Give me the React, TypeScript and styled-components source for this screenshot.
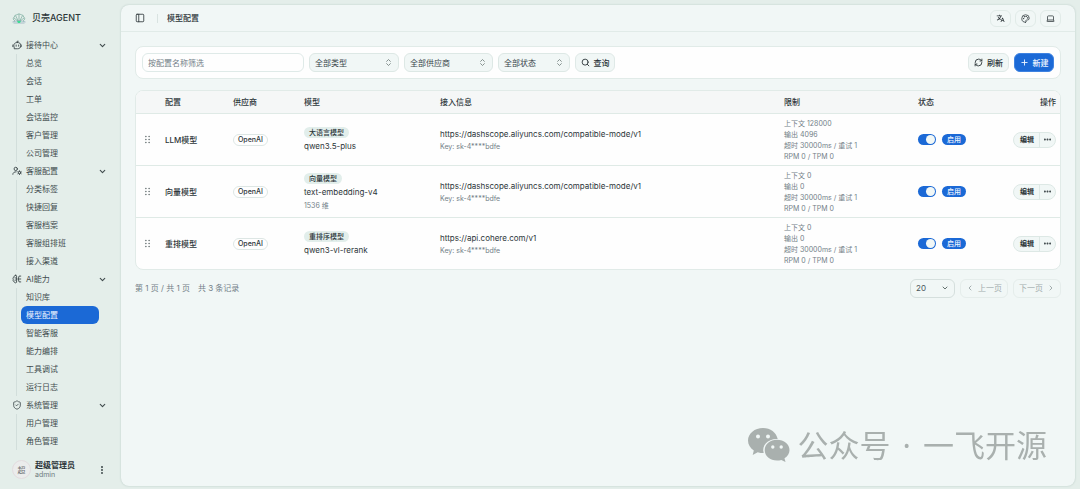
import React from "react";
import styled, { createGlobalStyle } from "styled-components";
import {
  ChevronDown,
  ChevronLeft,
  ChevronRight,
  ChevronsUpDown,
  Ellipsis,
  EllipsisVertical,
  Laptop,
  Palette,
  PanelLeft,
  Plus,
  RefreshCw,
  Search,
  ShieldCheck,
} from "lucide-react";
import { RiDraggable, RiTranslate2 } from "react-icons/ri";

const c = {
  shell: "#e4eeea",
  panel: "#f1f7f6",
  card: "#fefefe",
  line: "#e1ebe8",
  text: "#2c3539",
  nav: "#414c4e",
  muted: "#737f88",
  primary: "#1b69d6",
  soft: "#e2eeeb",
};

const Global = createGlobalStyle`
  *, *::before, *::after { box-sizing: border-box; }
  body {
    margin: 0;
    background: ${c.shell};
    color: ${c.text};
    font: 400 8px/12px Inter, "Noto Sans CJK SC", sans-serif;
  }
  button, input, select { font: inherit; color: inherit; margin: 0; }
  button { cursor: pointer; }
  svg { display: block; flex: none; }
`;

const Shell = styled.div`
  display: grid;
  grid-template-columns: 121px minmax(0, 1fr);
  min-height: 100vh;
`;

const Sidebar = styled.aside`
  display: flex;
  flex-direction: column;
  color: ${c.nav};
`;

const Brand = styled.div`
  display: flex;
  align-items: center;
  gap: 6px;
  height: 36px;
  padding: 0 12px;
  color: #2b3538;
  font-size: 9px;
  font-weight: 500;
`;

const GroupButton = styled.button`
  display: flex;
  align-items: center;
  gap: 4px;
  width: 100%;
  height: 18px;
  padding: 0 14px 0 12px;
  border: 0;
  background: none;
  text-align: left;

  span { flex: 1; }
`;

const SubList = styled.ul`
  margin: 0 22px 0 16px;
  padding: 0 0 0 4px;
  border-left: 1px solid #d2dedb;
  list-style: none;
`;

const SubLink = styled.a<{ $active?: boolean }>`
  display: flex;
  align-items: center;
  height: 18px;
  padding: 0 5px;
  border-radius: 6px;
  color: ${(p) => (p.$active ? "#eef5ff" : "inherit")};
  background: ${(p) => (p.$active ? c.primary : "transparent")};
  text-decoration: none;
`;

const Account = styled.div`
  display: flex;
  align-items: center;
  gap: 4px;
  height: 39px;
  margin-top: auto;
  padding: 0 14px 0 12px;
`;

const Avatar = styled.span`
  display: grid;
  place-items: center;
  width: 19px;
  height: 19px;
  border: 1px solid #e3dcdf;
  border-radius: 50%;
  background: #ebecec;
  color: #6d7375;
`;

const Who = styled.div`
  flex: 1;
  line-height: 10px;

  strong { display: block; font-weight: 600; color: ${c.text}; }
  span { display: block; font-size: 7px; color: #6f7b7e; }
`;

const PlainButton = styled.button`
  display: grid;
  place-items: center;
  padding: 0;
  border: 0;
  background: none;
`;

const Panel = styled.main`
  margin: 5px 5px 3px 0;
  border-radius: 8px;
  background: ${c.panel};
  box-shadow: 0 0 2px rgba(60, 100, 90, 0.28);
`;

const TopBar = styled.header`
  display: flex;
  align-items: center;
  height: 27px;
  padding: 0 14px;
  border-bottom: 1px solid ${c.line};
`;

const Separator = styled.span`
  width: 1px;
  height: 9px;
  margin: 0 9px 0 12px;
  background: #d9e3e1;
`;

const PageTitle = styled.h1`
  flex: 1;
  margin: 0;
  font-size: 8px;
  font-weight: 500;
`;

const IconButtons = styled.div`
  display: flex;
  gap: 4px;
`;

const IconButton = styled.button`
  display: grid;
  place-items: center;
  width: 21px;
  height: 17px;
  padding: 0;
  border: 1px solid ${c.line};
  border-radius: 6px;
  background: ${c.panel};
`;

const Content = styled.div`
  display: flex;
  flex-direction: column;
  gap: 11px;
  padding: 14px 14px 24px;
`;

const Toolbar = styled.form`
  display: flex;
  align-items: center;
  justify-content: space-between;
  padding: 6px;
  border: 1px solid ${c.line};
  border-radius: 8px;
  background: ${c.card};
`;

const Filters = styled.div`
  display: flex;
  gap: 5px;
`;

const SearchBox = styled.input`
  width: 162px;
  height: 19px;
  padding: 0 5px;
  border: 1px solid #dfeae8;
  border-radius: 6px;
  background: ${c.card};
  outline: 0;

  &::placeholder { color: ${c.muted}; opacity: 1; }
`;

const SelectWrap = styled.div<{ $width: number; $outlined?: boolean }>`
  position: relative;
  display: flex;
  align-items: center;
  width: ${(p) => p.$width}px;
  color: ${(p) => (p.$outlined ? "#4c585c" : "#39464a")};

  select {
    width: 100%;
    height: 19px;
    padding: 0 5px;
    border: 1px solid ${(p) => (p.$outlined ? "#d5dfdd" : "#dde8e5")};
    border-radius: 6px;
    background: ${c.panel};
    appearance: none;
    outline: 0;
  }

  svg {
    position: absolute;
    right: 6px;
    color: #64726f;
    pointer-events: none;
  }
`;

const Button = styled.button<{ $tone?: "primary"; $width: number }>`
  display: flex;
  align-items: center;
  justify-content: center;
  gap: 4px;
  width: ${(p) => p.$width}px;
  height: 19px;
  padding: 0;
  border: 1px solid ${(p) => (p.$tone === "primary" ? "#3e82e0" : "#dfe9e7")};
  border-radius: 6px;
  background: ${(p) => (p.$tone === "primary" ? c.primary : c.panel)};
  color: ${(p) => (p.$tone === "primary" ? "#eef5ff" : c.text)};
  font-weight: 500;

  &:disabled {
    color: #a3adae;
    border-color: #e5edeb;
    font-weight: 400;
  }
`;

const TableCard = styled.div`
  overflow: hidden;
  border: 1px solid ${c.line};
  border-radius: 8px;
  background: ${c.card};
`;

const Table = styled.table`
  width: 100%;
  border-collapse: collapse;
  table-layout: fixed;

  th {
    height: 22px;
    padding: 0 4px;
    background: #f5f7f7;
    font-weight: 500;
    text-align: left;
  }
  th:last-child, td:last-child { text-align: right; }
  td { padding: 4px 4px 3px; border-top: 1px solid #dfeae6; vertical-align: middle; }
`;

const Col = styled.col<{ $width?: number }>`
  width: ${(p) => (p.$width ? `${p.$width}px` : "auto")};
`;

const Grip = styled.button`
  display: grid;
  place-items: center;
  width: 15px;
  padding: 0;
  border: 0;
  background: none;
  color: #4a5658;
`;

const Name = styled.span`
  font-weight: 500;
`;

const Badge = styled.span<{ $kind: "outline" | "soft" | "solid" }>`
  display: inline-block;
  padding: 0 ${(p) => (p.$kind === "outline" ? 4 : 5)}px;
  border: ${(p) => (p.$kind === "outline" ? "1px solid #dde6e4" : "0")};
  border-radius: 6px;
  background: ${(p) => ({ outline: c.card, soft: c.soft, solid: c.primary })[p.$kind]};
  color: ${(p) => (p.$kind === "solid" ? "#eef5ff" : c.text)};
  font-size: 7px;
  font-weight: 500;
  line-height: ${(p) => (p.$kind === "outline" ? 10 : 11)}px;
  vertical-align: middle;
`;

const Stack = styled.div<{ $gap: number }>`
  display: flex;
  flex-direction: column;
  align-items: flex-start;
  gap: ${(p) => p.$gap}px;
  line-height: 12px;
`;

const Small = styled.div`
  color: ${c.muted};
  font-size: 7px;
  line-height: 11px;
`;

const Status = styled.div`
  display: flex;
  align-items: center;
  gap: 6px;
`;

const Switch = styled.input`
  display: flex;
  align-items: center;
  width: 18px;
  height: 11px;
  margin: 0;
  padding: 1px;
  border-radius: 6px;
  background: #cfdad7;
  appearance: none;

  &::before {
    content: "";
    width: 9px;
    height: 9px;
    border-radius: 50%;
    background: ${c.panel};
  }
  &:checked { background: ${c.primary}; justify-content: flex-end; }
`;

const Split = styled.div`
  display: inline-flex;
  height: 16px;
  border: 1px solid #dde8e5;
  border-radius: 8px;
  background: ${c.panel};
  vertical-align: middle;
  overflow: hidden;

  button {
    display: grid;
    place-items: center;
    padding: 0 5px 0 6px;
    border: 0;
    background: none;
    font-size: 7px;
    font-weight: 600;
  }
  button + button { padding: 0 3px; border-left: 1px solid #dde8e5; }
`;

const Footer = styled.footer`
  display: flex;
  align-items: center;
  justify-content: space-between;
  margin-top: -2px;
  color: ${c.muted};
`;

const Summary = styled.div`
  display: flex;
  gap: 8px;
`;

const Watermark = styled.div`
  position: fixed;
  right: 33px;
  bottom: 21px;
  display: flex;
  align-items: center;
  gap: 8px;
  color: #a9b0ae;
  font: 400 31px/46px "Noto Sans CJK SC", sans-serif;
  pointer-events: none;
`;

const Dot = styled.span`
  padding: 0 4px;
  font-family: "Noto Sans", sans-serif;
`;

const line = {
  fill: "none",
  stroke: "currentColor",
  strokeWidth: 2.2,
  strokeLinecap: "round" as const,
  strokeLinejoin: "round" as const,
};

const ShellLogo = () => (
  <svg width="14" height="12" viewBox="0 0 28 24" fill="none" aria-hidden="true">
    <path
      d="M13 19 4 12M13 19 7 7M14 19V4M15 19l6-12M15 19l9-7M6 18C1 15 2 10 5 10c0-4 3-5 5-4 1-3 7-3 8 0 2-1 5 0 5 4 3 0 4 5-1 8"
      stroke="#6fa596"
      strokeWidth="1.3"
    />
    <path d="M1 20c8-3 18-3 26 0M3 22h22" stroke="#7c9bb0" strokeWidth="1.2" />
    <path d="M10 18h8l-2 4h-4Z" fill="#3fdc95" />
  </svg>
);

const ChatBotIcon = () => (
  <svg width="10" height="10" viewBox="0 0 24 24" {...line} aria-hidden="true">
    <path d="M13 6c5 0 8 2 8 7 0 6-3 8-8 8H5c1-1 1-2 0-4-2-7 1-11 8-11ZM12 6V3h3M2 12v4M22 12v4M10 12v3M16 12v3" />
  </svg>
);

const UserCogIcon = () => (
  <svg width="10" height="10" viewBox="0 0 24 24" {...line} aria-hidden="true">
    <circle cx="9" cy="7" r="4" />
    <path d="M2 20c0-4 3-6 8-6" />
    <circle cx="18" cy="16" r="3" />
    <path d="M18 11.500V13M18 19v1.500M14 13.500l1.400.9M20.600 17.600l1.400.9M14 18.500l1.400-.9M20.600 14.400l1.400-.9" />
  </svg>
);

const BrainIcon = () => (
  <svg width="10" height="10" viewBox="0 0 24 24" {...line} aria-hidden="true">
    <path d="M9 3C6 3 5 5 5 7c-3 1-3 4-2 6-1 3 0 5 2 5 1 4 4 4 6 2V5c0-1-1-2-2-2ZM7 9c2 0 3 1 4 3-1 2-2 3-4 3" />
    <path d="M15 12h6M15 12l2-7h4M15 12l2 7h4" />
  </svg>
);

const WeChatLogo = () => (
  <svg width="42" height="34" viewBox="0 0 42 34" fill="currentColor" aria-hidden="true">
    <path
      fillRule="evenodd"
      d="M15 0C6.700 0 0 5.500 0 12.600c0 4 2.200 7.500 5.800 9.900L4.700 27l5-2.800c1.900.6 3.800.9 6 .9-2.400-8 4.600-14.700 14-14.100C28.400 4.500 22.500 0 15 0ZM10 6.400a2 2 0 1 1 0 4 2 2 0 0 1 0-4Zm10 0a2 2 0 1 1 0 4 2 2 0 0 1 0-4Z"
    />
    <path
      fillRule="evenodd"
      d="M29 11.800c-7 0-12.300 4.700-12.300 10.400S22 32.500 29 32.500c1.500 0 2.900-.2 4.300-.6l4.200 2-1-3.600c3-1.900 5-4.900 5-8.100 0-5.700-5.500-10.400-12.500-10.400Zm-4.200 5.500a1.700 1.700 0 1 1 0 3.400 1.700 1.700 0 0 1 0-3.400Zm8.400 0a1.700 1.700 0 1 1 0 3.400 1.700 1.700 0 0 1 0-3.400Z"
    />
  </svg>
);

const groups = [
  { title: "接待中心", icon: <ChatBotIcon />, items: ["总览", "会话", "工单", "会话监控", "客户管理", "公司管理"] },
  { title: "客服配置", icon: <UserCogIcon />, items: ["分类标签", "快捷回复", "客服档案", "客服组排班", "接入渠道"] },
  { title: "AI能力", icon: <BrainIcon />, items: ["知识库", "模型配置", "智能客服", "能力编排", "工具调试", "运行日志"] },
  { title: "系统管理", icon: <ShieldCheck size={10} />, items: ["用户管理", "角色管理"] },
];

const filters = [
  { label: "全部类型", width: 90 },
  { label: "全部供应商", width: 89 },
  { label: "全部状态", width: 72 },
];

const dashscope = "https://dashscope.aliyuncs.com/compatible-mode/v1";

const rows = [
  { name: "LLM模型", type: "大语言模型", model: "qwen3.5-plus", url: dashscope, context: 128000, output: 4096 },
  { name: "向量模型", type: "向量模型", model: "text-embedding-v4", dims: "1536 维", url: dashscope, context: 0, output: 0 },
  { name: "重排模型", type: "重排序模型", model: "qwen3-vl-rerank", url: "https://api.cohere.com/v1", context: 0, output: 0 },
];

export default function App() {
  return (
    <>
      <Global />
      <Shell>
        <Sidebar>
          <Brand>
            <ShellLogo />
            贝壳AGENT
          </Brand>
          <nav>
            {groups.map((g) => (
              <div key={g.title}>
                <GroupButton type="button" aria-expanded="true">
                  {g.icon}
                  <span>{g.title}</span>
                  <ChevronDown size={9} strokeWidth={3} />
                </GroupButton>
                <SubList>
                  {g.items.map((item) => (
                    <li key={item}>
                      <SubLink href="#" $active={item === "模型配置"}>
                        {item}
                      </SubLink>
                    </li>
                  ))}
                </SubList>
              </div>
            ))}
          </nav>
          <Account>
            <Avatar>超</Avatar>
            <Who>
              <strong>超级管理员</strong>
              <span>admin</span>
            </Who>
            <PlainButton type="button" aria-label="账号菜单">
              <EllipsisVertical size={10} strokeWidth={3} />
            </PlainButton>
          </Account>
        </Sidebar>

        <Panel>
          <TopBar>
            <PlainButton type="button" aria-label="收起侧栏">
              <PanelLeft size={10} />
            </PlainButton>
            <Separator />
            <PageTitle>模型配置</PageTitle>
            <IconButtons>
              <IconButton type="button" aria-label="语言">
                <RiTranslate2 size={9} />
              </IconButton>
              <IconButton type="button" aria-label="主题">
                <Palette size={9} />
              </IconButton>
              <IconButton type="button" aria-label="外观">
                <Laptop size={9} />
              </IconButton>
            </IconButtons>
          </TopBar>

          <Content>
            <Toolbar onSubmit={(e) => e.preventDefault()}>
              <Filters>
                <SearchBox placeholder="按配置名称筛选" aria-label="按配置名称筛选" />
                {filters.map((f) => (
                  <SelectWrap key={f.label} $width={f.width}>
                    <select aria-label={f.label}>
                      <option>{f.label}</option>
                    </select>
                    <ChevronsUpDown size={9} />
                  </SelectWrap>
                ))}
                <Button type="submit" $width={40}>
                  <Search size={9} strokeWidth={2.4} />
                  查询
                </Button>
              </Filters>
              <Filters>
                <Button type="button" $width={41}>
                  <RefreshCw size={9} strokeWidth={2.4} />
                  刷新
                </Button>
                <Button type="button" $width={40} $tone="primary">
                  <Plus size={9} strokeWidth={2.4} />
                  新建
                </Button>
              </Filters>
            </Toolbar>

            <TableCard>
              <Table>
                <colgroup>
                  <Col $width={25} />
                  <Col $width={68} />
                  <Col $width={71} />
                  <Col $width={136} />
                  <Col />
                  <Col $width={134} />
                  <Col $width={78} />
                  <Col $width={68} />
                </colgroup>
                <thead>
                  <tr>
                    <th aria-label="排序" />
                    <th>配置</th>
                    <th>供应商</th>
                    <th>模型</th>
                    <th>接入信息</th>
                    <th>限制</th>
                    <th>状态</th>
                    <th>操作</th>
                  </tr>
                </thead>
                <tbody>
                  {rows.map((r) => (
                    <tr key={r.name}>
                      <td>
                        <Grip type="button" aria-label="拖动排序">
                          <RiDraggable size={11} />
                        </Grip>
                      </td>
                      <td>
                        <Name>{r.name}</Name>
                      </td>
                      <td>
                        <Badge $kind="outline">OpenAI</Badge>
                      </td>
                      <td>
                        <Stack $gap={2}>
                          <Badge $kind="soft">{r.type}</Badge>
                          <span>{r.model}</span>
                          {r.dims && <Small>{r.dims}</Small>}
                        </Stack>
                      </td>
                      <td>
                        <Stack $gap={1}>
                          <span>{r.url}</span>
                          <Small>Key: sk-4****bdfe</Small>
                        </Stack>
                      </td>
                      <td>
                        <Small>上下文 {r.context}</Small>
                        <Small>输出 {r.output}</Small>
                        <Small>超时 30000ms / 重试 1</Small>
                        <Small>RPM 0 / TPM 0</Small>
                      </td>
                      <td>
                        <Status>
                          <Switch type="checkbox" role="switch" defaultChecked aria-label={`启用 ${r.name}`} />
                          <Badge $kind="solid">启用</Badge>
                        </Status>
                      </td>
                      <td>
                        <Split>
                          <button type="button">编辑</button>
                          <button type="button" aria-label="更多操作">
                            <Ellipsis size={9} strokeWidth={3} />
                          </button>
                        </Split>
                      </td>
                    </tr>
                  ))}
                </tbody>
              </Table>
            </TableCard>

            <Footer>
              <Summary>
                <span>第 1 页 / 共 1 页</span>
                <span>共 3 条记录</span>
              </Summary>
              <Filters>
                <SelectWrap $width={45} $outlined>
                  <select aria-label="每页条数">
                    <option>20</option>
                  </select>
                  <ChevronDown size={8} strokeWidth={3} />
                </SelectWrap>
                <Button type="button" $width={48} disabled>
                  <ChevronLeft size={8} strokeWidth={3} />
                  上一页
                </Button>
                <Button type="button" $width={48} disabled>
                  下一页
                  <ChevronRight size={8} strokeWidth={3} />
                </Button>
              </Filters>
            </Footer>
          </Content>
        </Panel>
      </Shell>
      <Watermark>
        <WeChatLogo />
        <span>
          公众号<Dot>{" · "}</Dot>一飞开源
        </span>
      </Watermark>
    </>
  );
}
